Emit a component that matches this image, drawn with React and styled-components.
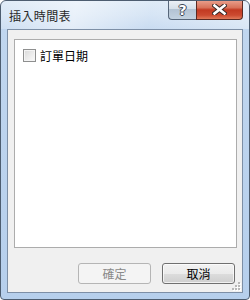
import styled, { createGlobalStyle } from 'styled-components'

const Global = createGlobalStyle`
	html, body { margin: 0; padding: 0; background: #fff; }
	body { font-family: "Noto Sans CJK TC", "Liberation Sans", sans-serif; }
`

function Grip() {
	const dots = [[6, 0], [3, 3], [6, 3], [0, 6], [3, 6], [6, 6]]
	return (
		<GripBox width="9" height="9" viewBox="0 0 9 9">
			{dots.map(([x, y]) => (
				<g key={`${x}-${y}`}>
					<rect x={x + 1} y={y + 1} width="2" height="2" fill="#fff" />
					<rect x={x} y={y} width="2" height="2" fill="#b8b8b8" />
				</g>
			))}
		</GripBox>
	)
}

function CloseGlyph() {
	return (
		<svg width="15" height="11" viewBox="0 0 15 11">
			<path
				d="M2.5 1.5 L12.5 9.5 M12.5 1.5 L2.5 9.5"
				stroke="#3a2a28"
				strokeWidth="4.6"
				strokeLinecap="square"
			/>
			<path
				d="M2.5 1.5 L12.5 9.5 M12.5 1.5 L2.5 9.5"
				stroke="#fff"
				strokeWidth="2.6"
				strokeLinecap="square"
			/>
		</svg>
	)
}

export default function App() {
	return (
		<>
			<Global />
			<Frame>
				<TitleBar>
					<Title>插入時間表</Title>
					<Caption>
						<HelpBtn>?</HelpBtn>
						<CloseBtn>
							<CloseGlyph />
						</CloseBtn>
					</Caption>
				</TitleBar>
				<Client>
					<List>
						<Item>
							<Check />
							<Label>訂單日期</Label>
						</Item>
					</List>
					<Buttons>
						<Button disabled>確定</Button>
						<Button>取消</Button>
					</Buttons>
					<Grip />
				</Client>
			</Frame>
		</>
	)
}

const Frame = styled.div`
	box-sizing: border-box;
	width: 250px;
	height: 300px;
	border: 1px solid #4d5d70;
	border-radius: 6px 6px 4px 4px;
	background: linear-gradient(
		180deg,
		#d9e7f6 0px,
		#cfe0f3 14px,
		#c0d6ef 28px,
		#b6cfec 100%
	);
	display: flex;
	flex-direction: column;
	overflow: hidden;
`
const TitleBar = styled.div`
	height: 28px;
	display: flex;
	align-items: flex-start;
	background: linear-gradient(
		100deg,
		rgba(255, 255, 255, 0.2) 0%,
		rgba(255, 255, 255, 0.55) 30%,
		rgba(255, 255, 255, 0.15) 60%,
		rgba(255, 255, 255, 0.4) 100%
	);
`
const Title = styled.div`
	padding: 7px 0 0 8px;
	font-size: 12px;
	line-height: 16px;
	color: #2a2a2a;
	letter-spacing: 0.4px;
`
const Caption = styled.div`
	margin-left: auto;
	margin-right: 6px;
	margin-top: -1px;
	display: flex;
`
const HelpBtn = styled.div`
	box-sizing: border-box;
	width: 28px;
	height: 20px;
	border: 1px solid #56667a;
	border-top: none;
	border-right: none;
	border-radius: 0 0 0 4px;
	background: linear-gradient(180deg, #eef2f7 0%, #d6e0ea 45%, #b3c3d3 50%, #c3d2e0 100%);
	display: flex;
	align-items: center;
	justify-content: center;
	font: bold 14px "DejaVu Sans", sans-serif;
	color: #fff;
	text-shadow: -1px 0 #3c4654, 1px 0 #3c4654, 0 -1px #3c4654, 0 1px #3c4654;
`
const CloseBtn = styled.div`
	box-sizing: border-box;
	width: 47px;
	height: 20px;
	border: 1px solid #5a2a22;
	border-top: none;
	border-radius: 0 0 4px 0;
	background: linear-gradient(180deg, #eba390 0%, #d8725a 40%, #c23a22 52%, #cc4a30 80%, #e07a5a 100%);
	display: flex;
	align-items: center;
	justify-content: center;
`
const Client = styled.div`
	position: relative;
	flex: 1;
	margin: 0 6px 6px;
	border: 1px solid #7d8fa6;
	background: #f0f0f0;
	padding: 9px 5px 8px 6px;
	display: flex;
	flex-direction: column;
`
const List = styled.div`
	height: 209px;
	box-sizing: border-box;
	border: 1px solid #acacac;
	background: #fff;
	padding: 9px 8px;
`
const Item = styled.div`
	display: flex;
	align-items: center;
	gap: 4px;
	height: 13px;
`
const Check = styled.span`
	box-sizing: border-box;
	width: 13px;
	height: 13px;
	border: 1px solid #8e8f8f;
	background: linear-gradient(135deg, #d9d9d9 0%, #eaeaea 50%, #fbfbfb 100%);
	box-shadow: inset 0 0 0 1px #f4f4f4;
`
const Label = styled.span`
	font-size: 12px;
	line-height: 13px;
	color: #000;
`
const Buttons = styled.div`
	margin-top: auto;
	display: flex;
	justify-content: flex-end;
	gap: 11px;
	padding-right: 2px;
`
const Button = styled.button`
	box-sizing: border-box;
	width: 73px;
	height: 21px;
	padding: 0;
	border-radius: 3px;
	font-family: "Noto Sans CJK TC", sans-serif;
	font-size: 12px;
	line-height: 1;
	border: 1px solid ${p => (p.disabled ? '#b5b5b5' : '#707070')};
	color: ${p => (p.disabled ? '#8a8a8a' : '#000')};
	background: ${p =>
		p.disabled
			? '#f4f4f4'
			: 'linear-gradient(180deg, #f2f2f2 0%, #ebebeb 50%, #dddddd 51%, #cfcfcf 100%)'};
	box-shadow: inset 0 0 0 1px ${p => (p.disabled ? '#f4f4f4' : 'rgba(255,255,255,0.7)')};
`
const GripBox = styled.svg`
	position: absolute;
	right: 1px;
	bottom: 1px;
`
